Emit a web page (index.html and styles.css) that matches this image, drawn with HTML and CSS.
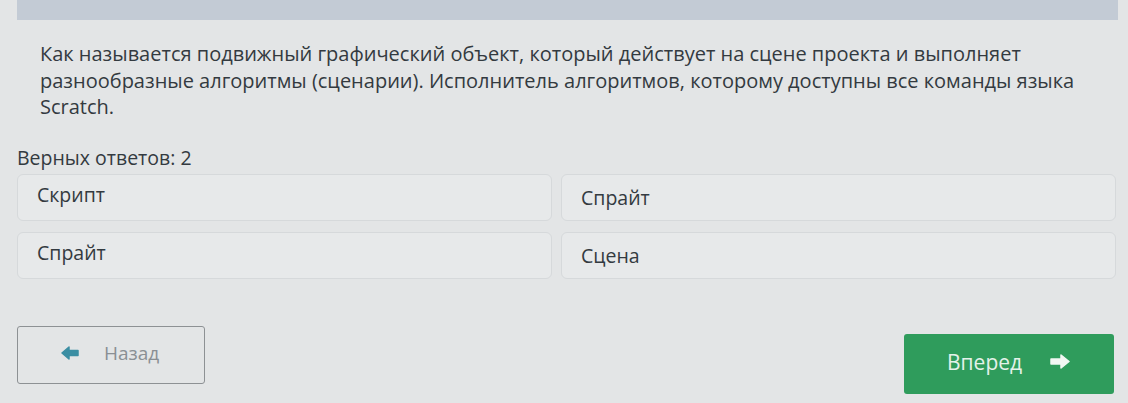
FILE: index.html
```
<!DOCTYPE html>
<html lang="ru">

<head>
  <meta charset="UTF-8">
  <meta name="viewport" content="width=device-width, initial-scale=1.0">
  <title>Тест</title>
  <link rel="stylesheet" href="styles.css">
</head>

<body>
  <div class="top-bar"></div>

  <div class="question">
    Как называется подвижный графический объект, который действует на сцене проекта и выполняет
    разнообразные алгоритмы (сценарии). Исполнитель алгоритмов, которому доступны все команды языка
    Scratch.
  </div>

  <div class="count">Верных ответов: 2</div>

  <div class="answers">
    <div class="answer left">Скрипт</div>
    <div class="answer">Спрайт</div>
    <div class="answer left">Спрайт</div>
    <div class="answer">Сцена</div>
  </div>

  <div class="nav">
    <button class="btn-back" type="button">
      <svg width="18" height="14" viewBox="0 0 18 14">
        <path d="M1 7 L8 1 L8 4.5 L17 4.5 L17 9.5 L8 9.5 L8 13 Z" fill="#3b8ea3" stroke="#3b8ea3" stroke-width="1.5" stroke-linejoin="round" />
      </svg>
      <span>Назад</span>
    </button>
    <button class="btn-next" type="button">
      <span>Вперед</span>
      <svg width="20" height="15" viewBox="0 0 20 15">
        <path d="M19 7.5 L11 1 L11 5 L1 5 L1 10 L11 10 L11 14 Z" fill="#f2f7f3" stroke="#f2f7f3" stroke-width="1.5" stroke-linejoin="round" />
      </svg>
    </button>
  </div>
</body>

</html>
```

FILE: styles.css
```
body {
  font-family: "Open Sans", "Noto Sans", sans-serif;
  background-color: #e3e5e6;
  color: #333a40;
  margin: 0;
  padding: 0 10px 0 17px;
  height: 403px;
  overflow: hidden;
}

.top-bar {
  height: 20px;
  background-color: #c3cbd5;
}

.question {
  font-size: 20px;
  line-height: 26.5px;
  padding: 21px 0 0 23px;
  width: 1040px;
}

.count {
  font-size: 19.5px;
  margin-top: 25px;
  line-height: 24px;
}

.answers {
  display: grid;
  grid-template-columns: 535px 555px;
  column-gap: 9px;
  row-gap: 11px;
  margin-top: 4px;
}

.answer {
  height: 47px;
  box-sizing: border-box;
  border: 1.5px solid #d6d9db;
  border-radius: 6px;
  background-color: #e7e9ea;
  font-size: 19.5px;
  padding: 0 19px;
  display: flex;
  align-items: center;
}

.answer.left {
  align-items: flex-start;
  padding-top: 6px;
}

.nav {
  display: flex;
  justify-content: space-between;
  align-items: flex-start;
  margin-top: 47px;
  padding-right: 4px;
}

.btn-back {
  width: 188px;
  height: 58px;
  background: transparent;
  border: 1.5px solid #8d9194;
  border-radius: 3px;
  display: flex;
  align-items: center;
  padding: 0 0 4px 43px;
  gap: 25px;
  font-family: inherit;
  font-size: 19px;
  color: #8a8f94;
}

.btn-next {
  width: 210px;
  height: 60px;
  margin-top: 8px;
  background-color: #2f9c5c;
  border: none;
  border-radius: 3px;
  display: flex;
  align-items: center;
  padding: 0 44px 4px 43px;
  justify-content: space-between;
  font-family: inherit;
  font-size: 21px;
  color: #e4f2ea;
}
```
